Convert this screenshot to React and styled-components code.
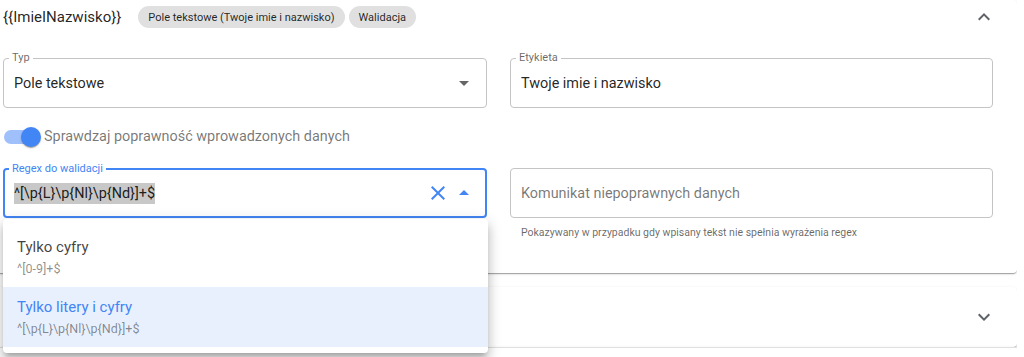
import React from 'react';
import styled, { createGlobalStyle } from 'styled-components';

const primary = '#4285f4';

const GlobalStyle = createGlobalStyle`
  html, body {
    margin: 0;
    padding: 0;
    background: #ffffff;
    overflow: hidden;
  }
  body {
    font-family: Roboto, "Liberation Sans", sans-serif;
    color: rgba(0, 0, 0, 0.87);
  }
`;

const Page = styled.div`
  width: 1030px;
  margin-left: -13px;
  height: 357px;
  overflow: hidden;
  display: flex;
  flex-direction: column;
`;

const Accordion = styled.div`
  background: #fff;
  border-radius: ${props => props.$flatTop ? '0' : '4px'};
  box-shadow: 0 2px 1px -1px rgba(0,0,0,.2), 0 1px 1px 0 rgba(0,0,0,.14), 0 1px 3px 0 rgba(0,0,0,.12);
  margin-top: ${props => props.$gap || 0}px;
  border-top: ${props => props.$flatTop ? '1px solid rgba(0,0,0,0.12)' : 'none'};
  flex-shrink: 0;
`;

const Summary = styled.div`
  height: ${props => props.$height}px;
  display: flex;
  align-items: center;
  padding: 0 21px 0 16px;
`;

const Title = styled.span`
  font-size: 15px;
  color: rgba(0, 0, 0, 0.87);
  margin-right: 17px;
`;

const Chip = styled.span`
  display: inline-flex;
  align-items: center;
  height: 22px;
  padding: 0 10px;
  border-radius: 11px;
  background: #e0e0e0;
  font-size: 11px;
  color: rgba(0, 0, 0, 0.85);
  margin-right: 4px;
`;

const Spacer = styled.div`
  flex: 1;
`;

const Chevron = styled.svg`
  width: 24px;
  height: 24px;
  fill: #5f6368;
`;

const Details = styled.div`
  padding: 24px 24px 34px 16px;
  display: grid;
  grid-template-columns: 484px 483px;
  column-gap: 23px;
`;

const Cell = styled.div`
  position: relative;
`;

const FieldBox = styled.div`
  position: relative;
  height: 50px;
  box-sizing: border-box;
  border-radius: 4px;
  border: ${props => props.$focused ? `2px solid ${primary}` : '1px solid #c4c4c4'};
  display: flex;
  align-items: center;
  padding: 0 ${props => props.$focused ? 9 : 10}px 0 ${props => props.$focused ? 9 : 10}px;
`;

const FieldLabel = styled.span`
  position: absolute;
  top: -8px;
  left: ${props => props.$focused ? 4 : 5}px;
  padding: 0 3px;
  background: #fff;
  font-size: 11px;
  line-height: 14px;
  color: ${props => props.$focused ? primary : 'rgba(0,0,0,0.6)'};
`;

const Value = styled.span`
  flex: 1;
  font-size: 14.4px;
  color: ${props => props.$placeholder ? 'rgba(0,0,0,0.55)' : 'rgba(0,0,0,0.87)'};
  white-space: nowrap;
`;

const Selected = styled.span`
  background: #c8c8c8;
  padding: 2px 0;
`;

const Icon = styled.svg`
  width: 24px;
  height: 24px;
  fill: ${props => props.$color || '#666'};
  flex-shrink: 0;
  margin-left: ${props => props.$gap || 0}px;
`;

const Helper = styled.div`
  margin: 8px 0 0 11px;
  font-size: 10.5px;
  line-height: 13px;
  color: rgba(0, 0, 0, 0.6);
`;

const SwitchRow = styled.div`
  grid-column: 1 / span 2;
  height: 60px;
  padding: 0 0 3px 1px;
  box-sizing: border-box;
  display: flex;
  align-items: center;
`;

const Track = styled.div`
  position: relative;
  width: 34px;
  height: 14px;
  border-radius: 7px;
  background: #9fc0fb;
  margin-right: 6px;
`;

const Thumb = styled.div`
  position: absolute;
  top: -3px;
  left: 17px;
  width: 20px;
  height: 20px;
  border-radius: 50%;
  background: ${primary};
  box-shadow: 0 2px 1px -1px rgba(0,0,0,.2), 0 1px 1px 0 rgba(0,0,0,.14), 0 1px 3px 0 rgba(0,0,0,.12);
`;

const SwitchLabel = styled.span`
  font-size: 14.4px;
  color: rgba(0, 0, 0, 0.55);
`;

const Popper = styled.ul`
  position: absolute;
  top: 51px;
  left: 0;
  width: 485px;
  margin: 0;
  padding: 8px 0 6px;
  list-style: none;
  background: #fff;
  border-radius: 4px;
  box-shadow: 0 5px 5px -3px rgba(0,0,0,.2), 0 8px 10px 1px rgba(0,0,0,.14), 0 3px 14px 2px rgba(0,0,0,.12);
  z-index: 10;
`;

const Option = styled.li`
  height: 60px;
  box-sizing: border-box;
  padding: 9px 14px;
  background: ${props => props.$active ? '#e8f0fe' : 'transparent'};
`;

const OptionTitle = styled.div`
  font-size: 15px;
  line-height: 22px;
  color: ${props => props.$active ? primary : 'rgba(0,0,0,0.75)'};
`;

const OptionSub = styled.div`
  font-size: 12.5px;
  line-height: 18px;
  margin-top: 2px;
  color: rgba(0, 0, 0, 0.45);
`;

const expandMore = 'M16.59 8.59 12 13.17 7.41 8.59 6 10l6 6 6-6z';
const expandLess = 'M12 8l-6 6 1.41 1.41L12 10.83l4.59 4.58L18 14z';
const closePath = 'M19 6.41 17.59 5 12 10.59 6.41 5 5 6.41 10.59 12 5 17.59 6.41 19 12 13.41 17.59 19 19 17.59 13.41 12z';

const options = [
  { title: 'Tylko cyfry', regex: '^[0-9]+$' },
  { title: 'Tylko litery i cyfry', regex: '^[\\p{L}\\p{Nl}\\p{Nd}]+$', active: true },
];

export default function App() {
  return (
    <>
      <GlobalStyle />
      <Page>
        <Accordion>
          <Summary $height={34}>
            <Title>{'{{ImieINazwisko}}'}</Title>
            <Chip>Pole tekstowe (Twoje imie i nazwisko)</Chip>
            <Chip>Walidacja</Chip>
            <Spacer />
            <Chevron viewBox="0 0 24 24"><path d={expandLess} /></Chevron>
          </Summary>
          <Details>
            <Cell>
              <FieldBox>
                <FieldLabel>Typ</FieldLabel>
                <Value>Pole tekstowe</Value>
                <Icon viewBox="0 0 24 24"><path d="M7 10l5 5 5-5z" /></Icon>
              </FieldBox>
            </Cell>
            <Cell>
              <FieldBox>
                <FieldLabel>Etykieta</FieldLabel>
                <Value>Twoje imie i nazwisko</Value>
              </FieldBox>
            </Cell>
            <SwitchRow>
              <Track><Thumb /></Track>
              <SwitchLabel>Sprawdzaj poprawność wprowadzonych danych</SwitchLabel>
            </SwitchRow>
            <Cell>
              <FieldBox $focused>
                <FieldLabel $focused>Regex do walidacji</FieldLabel>
                <Value><Selected>{'^[\\p{L}\\p{Nl}\\p{Nd}]+$'}</Selected></Value>
                <Icon viewBox="0 0 24 24" $color={primary}><path d={closePath} /></Icon>
                <Icon viewBox="0 0 24 24" $color={primary} $gap={2}><path d="M7 14l5-5 5 5z" /></Icon>
              </FieldBox>
              <Popper>
                {options.map(opt => (
                  <Option key={opt.title} $active={opt.active}>
                    <OptionTitle $active={opt.active}>{opt.title}</OptionTitle>
                    <OptionSub>{opt.regex}</OptionSub>
                  </Option>
                ))}
              </Popper>
            </Cell>
            <Cell>
              <FieldBox>
                <Value $placeholder>Komunikat niepoprawnych danych</Value>
              </FieldBox>
              <Helper>Pokazywany w przypadku gdy wpisany tekst nie spełnia wyrażenia regex</Helper>
            </Cell>
          </Details>
        </Accordion>
        <Accordion $gap={14}>
          <Summary $height={60}>
            <Spacer />
            <Chevron viewBox="0 0 24 24"><path d={expandMore} /></Chevron>
          </Summary>
        </Accordion>
        <Accordion $flatTop>
          <Summary $height={48} />
        </Accordion>
      </Page>
    </>
  );
}
